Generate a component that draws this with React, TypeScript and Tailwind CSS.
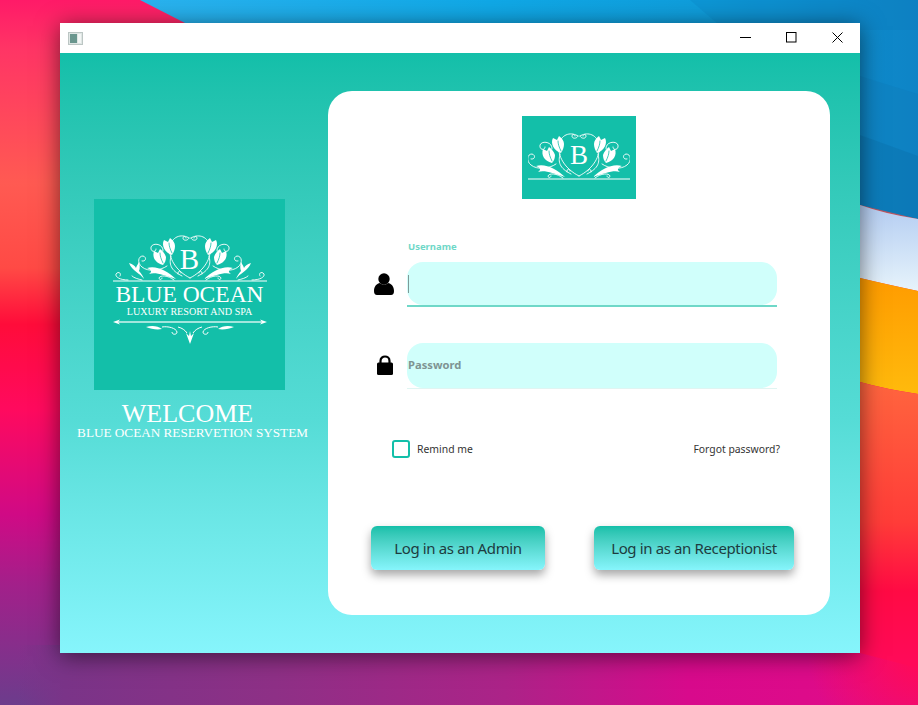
function Wallpaper() {
  return (
    <svg className="absolute inset-0" width="918" height="705" viewBox="0 0 918 705">
      <defs>
        <linearGradient id="leftSide" x1="0" y1="0" x2="0" y2="705" gradientUnits="userSpaceOnUse">
          <stop offset="0" stopColor="#ff1a68" />
          <stop offset="0.07" stopColor="#ff3565" />
          <stop offset="0.26" stopColor="#ff5a52" />
          <stop offset="0.38" stopColor="#ff4a45" />
          <stop offset="0.46" stopColor="#ff0c3a" />
          <stop offset="0.58" stopColor="#ff0a5e" />
          <stop offset="0.73" stopColor="#d00a85" />
          <stop offset="0.83" stopColor="#a2208a" />
          <stop offset="1" stopColor="#6c3c8c" />
        </linearGradient>
        <linearGradient id="bottomStrip" x1="0" y1="0" x2="918" y2="0" gradientUnits="userSpaceOnUse">
          <stop offset="0.02" stopColor="#7a3488" stopOpacity="0" />
          <stop offset="0.07" stopColor="#7a3488" />
          <stop offset="0.3" stopColor="#8e3086" />
          <stop offset="0.55" stopColor="#ac2388" />
          <stop offset="0.75" stopColor="#d80a8c" />
          <stop offset="1" stopColor="#e20c88" />
        </linearGradient>
        <radialGradient id="pinkCorner" cx="925" cy="640" r="120" gradientUnits="userSpaceOnUse">
          <stop offset="0.2" stopColor="#ff0a58" />
          <stop offset="1" stopColor="#ff0a58" stopOpacity="0" />
        </radialGradient>
        <linearGradient id="topBlue" x1="140" y1="0" x2="918" y2="0" gradientUnits="userSpaceOnUse">
          <stop offset="0" stopColor="#2ab2ee" />
          <stop offset="0.45" stopColor="#10a8e6" />
          <stop offset="0.72" stopColor="#0f9ddb" />
          <stop offset="1" stopColor="#0e84c6" />
        </linearGradient>
        <linearGradient id="whiteBand" x1="0" y1="205" x2="0" y2="290" gradientUnits="userSpaceOnUse">
          <stop offset="0" stopColor="#b4cdf2" />
          <stop offset="1" stopColor="#e6f3fb" />
        </linearGradient>
        <linearGradient id="orangeBand" x1="0" y1="280" x2="0" y2="390" gradientUnits="userSpaceOnUse">
          <stop offset="0" stopColor="#ff9c00" />
          <stop offset="1" stopColor="#ffb90c" />
        </linearGradient>
        <linearGradient id="redBand" x1="0" y1="385" x2="0" y2="660" gradientUnits="userSpaceOnUse">
          <stop offset="0" stopColor="#ff643e" />
          <stop offset="0.5" stopColor="#ff3c38" />
          <stop offset="0.75" stopColor="#ff0a44" />
          <stop offset="1" stopColor="#ff0a58" />
        </linearGradient>
      </defs>
      <rect width="918" height="705" fill="url(#leftSide)" />
      <rect x="0" y="645" width="918" height="60" fill="url(#bottomStrip)" />
      <rect x="780" y="520" width="138" height="185" fill="url(#pinkCorner)" />
      <polygon points="140,0 918,0 918,219 860,205 185,23" fill="url(#topBlue)" />
      <polygon points="690,0 918,0 918,30 725,30" fill="#0a6ba8" opacity="0.14" />
      <path d="M860 76 L918 94 L918 219 Q885 214 860 205 Z" fill="#0d6aa6" opacity="0.14" />
      <path d="M860 135 L918 156 L918 219 Q885 214 860 205 Z" fill="#0b5f98" opacity="0.22" />
      <path d="M860 205 Q885 214 918 219 L918 291 Q885 284 860 278 Z" fill="url(#whiteBand)" />
      <path d="M860 278 Q885 284 918 291 L918 394 Q885 389 860 382 Z" fill="url(#orangeBand)" />
      <path d="M860 382 Q885 389 918 394 L918 668 L860 653 Z" fill="url(#redBand)" />
    </svg>
  );
}

// one half of the crest, drawn on the left and mirrored for the right
function CrestHalf({ wide }: { wide: boolean }) {
  return (
    <g>
      <g fill="none" stroke="#fff" strokeWidth="0.9" strokeLinecap="round">
        <path d="M-1 4 C-7 0 -17 1 -20 12 C-22 24 -14 37 0 44" />
        <path d="M-1 4 C-2 7 -7 7 -7 4 C-7 2 -4 2 -4 4" />
        <path d="M-19 22 C-21 30 -20 36 -8 42" />
        <path d="M-27 17 C-26 10 -37 8 -39 13 C-40 18 -34 19 -34 15" />
        <path d="M-23 32 C-30 37 -42 38 -48 33 C-53 29 -52 22 -47 22 C-43 23 -44 28 -48 27" />
        <path d="M-16 46 C-22 41 -30 41 -31 44 C-31 46 -28 46 -28 44" />
        <path d="M-12 40 C-13 37 -9 36 -9 39" />
        {wide && <path d="M-62 46 C-70 46 -75 43 -74 40 C-72 37 -68 39 -70 42" />}
        {wide && <path d="M-48 46 C-52 45 -56 44 -58 42" />}
      </g>
      <g fill="#fff">
        <path d="M-18 21 C-25 19 -29 11 -26 6 L-22 8 L-20 4 C-17 6 -15 9 -15 12 C-15 15 -16 18 -18 21Z" />
        <path d="M-27 31 C-35 29 -38 23 -36 17 L-32 19 L-30 15 C-27 17 -25 20 -24 23 C-24 26 -25 29 -27 31Z" />
        <path d="M-14 45 C-22 37 -34 31 -43 34 C-38 36 -38 38 -41 40 C-34 38 -27 41 -14 45Z" />
        {wide && (
          <path d="M-46 45 C-50 39 -58 37 -61 29 C-57 30 -55 32 -54 34 C-53 31 -52 30 -51 28 C-50 32 -50 34 -51 37 C-49 39 -47 42 -46 45Z" />
        )}
      </g>
      <g fill="none" stroke="#13bfa9" strokeWidth="0.8" strokeLinecap="round">
        <path d="M-18 19 C-20 15 -21 12 -21 9" />
        <path d="M-27 29 C-29 25 -30 22 -30 19" />
      </g>
    </g>
  );
}

function Crest({ wide }: { wide: boolean }) {
  const half = wide ? 77 : 51;
  return (
    <svg width={half * 2} height="48" viewBox={`${-half} 0 ${half * 2} 48`} className="block">
      <CrestHalf wide={wide} />
      <g transform="scale(-1 1)">
        <CrestHalf wide={wide} />
      </g>
      <line x1={-half} y1="47" x2={half} y2="47" stroke="#fff" strokeWidth="1" />
    </svg>
  );
}

function BigLogo() {
  return (
    <div className="w-[191px] h-[191px] bg-[#13bfa9] flex flex-col items-center pt-[35px] text-white font-['Liberation_Serif',serif]">
      <div className="relative">
        <Crest wide />
        <span className="absolute left-0 right-0 top-[9px] text-center text-[29px] leading-[32px]">B</span>
      </div>
      <div className="text-[23.5px] leading-[22px] mt-[1px] whitespace-nowrap">BLUE OCEAN</div>
      <div className="text-[10.1px] leading-[11px] whitespace-nowrap mt-[1px]">LUXURY RESORT AND SPA</div>
      <svg width="154" height="26" viewBox="-77 0 154 26" className="block mt-[2px]">
        <g fill="#fff">
          <rect x="-72" y="2.4" width="144" height="1.2" />
          <polygon points="-77,3 -70,0.5 -72,3 -70,5.5" />
          <polygon points="77,3 70,0.5 72,3 70,5.5" />
          <polygon points="0,25 -4,14 -1,17 0,12 1,17 4,14" />
          <path d="M-44 8 C-38 6 -32 7 -28 10 C-33 11 -39 10 -44 8Z" />
          <path d="M44 8 C38 6 32 7 28 10 C33 11 39 10 44 8Z" />
        </g>
        <g fill="none" stroke="#fff" strokeWidth="1">
          <path d="M-28 8 C-22 7 -14 9 -13 13 C-13 16 -18 16 -18 13" />
          <path d="M28 8 C22 7 14 9 13 13 C13 16 18 16 18 13" />
          <path d="M-12 8 C-8 9 -5 11 -3 14" />
          <path d="M12 8 C8 9 5 11 3 14" />
        </g>
      </svg>
    </div>
  );
}

function SmallLogo() {
  return (
    <div className="w-[114px] h-[83px] bg-[#13bfa9] flex justify-center pt-[16px] text-white font-['Liberation_Serif',serif]">
      <div className="relative">
        <Crest wide={false} />
        <span className="absolute left-0 right-0 top-[8px] text-center text-[27px] leading-[30px]">B</span>
      </div>
    </div>
  );
}

function Caption() {
  return (
    <div className="flex items-center pb-[2px]">
      <button className="w-[46px] h-[28px] flex items-center justify-center">
        <svg width="11" height="11" viewBox="0 0 11 11">
          <line x1="0" y1="5.5" x2="11" y2="5.5" stroke="#000" />
        </svg>
      </button>
      <button className="w-[46px] h-[28px] flex items-center justify-center">
        <svg width="11" height="11" viewBox="0 0 11 11">
          <rect x="0.5" y="0.5" width="9.5" height="9.5" fill="none" stroke="#000" />
        </svg>
      </button>
      <button className="w-[46px] h-[28px] flex items-center justify-center">
        <svg width="11" height="11" viewBox="0 0 11 11">
          <path d="M0.5 0.5 L10.5 10.5 M10.5 0.5 L0.5 10.5" stroke="#000" fill="none" />
        </svg>
      </button>
    </div>
  );
}

function UserIcon() {
  return (
    <svg width="20" height="22" viewBox="0 0 20 22" className="block">
      <circle cx="10" cy="6" r="5.7" fill="#000" />
      <path d="M0 18 C0 13 3 10.5 6 10 C8 12 12 12 14 10 C17 10.5 20 13 20 18 C20 20.5 19 22 17 22 L3 22 C1 22 0 20.5 0 18Z" fill="#000" />
    </svg>
  );
}

function LockIcon() {
  return (
    <svg width="16" height="20" viewBox="0 0 16 20" className="block">
      <path d="M3.5 9 L3.5 6 C3.5 0 12.5 0 12.5 6 L12.5 9" fill="none" stroke="#000" strokeWidth="2.2" />
      <rect x="0" y="7.5" width="16" height="12.5" rx="1.5" fill="#000" />
    </svg>
  );
}

const buttonClass =
  "h-[44px] rounded-[6px] bg-linear-to-b from-[#13bfa9] to-[#86f5fc] text-[15px] tracking-[-0.37px] text-[#1d3c40] shadow-[0_5px_10px_rgba(0,0,0,0.35)]";

export default function App() {
  return (
    <div className="relative w-[918px] h-[705px] overflow-hidden font-['Noto_Sans',sans-serif]">
      <Wallpaper />
      <div className="absolute left-[60px] top-[23px] w-[800px] h-[630px] flex flex-col shadow-[0_3px_22px_rgba(0,0,0,0.55)]">
        <div className="h-[30px] bg-white flex items-center justify-between pl-[8px]">
          <div className="w-[15px] h-[13px] bg-[#dfe6e4] border border-[#bcc6c4] flex gap-[1px] p-[1px]">
            <div className="w-[7px] bg-[#6a968e]" />
            <div className="w-[3px] bg-[#f2f6f5]" />
          </div>
          <Caption />
        </div>

        <div className="flex-1 flex bg-linear-to-b from-[#13bfa9] via-[#55dcd6] via-61% to-[#86f5fc] pl-[34px] pr-[30px] pt-[38px]">
          <div className="w-[234px] flex flex-col items-start pt-[108px]">
            <BigLogo />
            <div className="w-[191px] flex flex-col items-center text-white font-['Liberation_Serif',serif] mt-[13px] whitespace-nowrap">
              <div className="text-[26px] leading-[22px] ml-[-4px]">WELCOME</div>
              <div className="text-[13.2px] leading-[12px] mt-[2px] ml-[6px]">BLUE OCEAN RESERVETION SYSTEM</div>
            </div>
          </div>

          <div className="w-[502px] h-[524px] bg-white rounded-[24px] flex flex-col pt-[25px]">
            <div className="flex justify-center">
              <SmallLogo />
            </div>

            <div className="ml-[80px] mt-[41px] text-[9.5px] leading-[13px] font-bold text-[#6fd8c8]">Username</div>
            <div className="flex items-center mt-[9px]">
              <div className="w-[79px] flex justify-end pr-[13px] mt-[-1px]">
                <UserIcon />
              </div>
              <div className="w-[370px] h-[45px] flex flex-col">
                <div className="h-[43px] bg-[#d0fffb] rounded-[16px] flex items-center pl-[1px]">
                  <div className="w-[1px] h-[18px] bg-[#7f9a98]" />
                </div>
                <div className="h-[2px] bg-[#6fd8c8]" />
              </div>
            </div>

            <div className="flex items-center mt-[36px]">
              <div className="w-[79px] flex justify-end pr-[14px] mt-[-3px]">
                <LockIcon />
              </div>
              <div className="w-[370px] h-[46px] flex flex-col">
                <div className="h-[45px] bg-[#d0fffb] rounded-[16px] flex items-center pl-[1px] text-[11.2px] font-bold text-[#7e9492]">
                  Password
                </div>
                <div className="h-[1px] bg-[#e0f5f2]" />
              </div>
            </div>

            <div className="flex items-center justify-between ml-[64px] w-[388px] mt-[51px] text-[10.4px] leading-[18px] text-[#333]">
              <div className="flex items-center gap-[7px]">
                <div className="w-[18px] h-[18px] rounded-[3px] border-2 border-[#13bfa9]" />
                <span>Remind me</span>
              </div>
              <span>Forgot password?</span>
            </div>

            <div className="flex ml-[43px] gap-[49px] mt-[68px]">
              <button className={`w-[174px] ${buttonClass}`}>Log in as an Admin</button>
              <button className={`w-[200px] ${buttonClass}`}>Log in as an Receptionist</button>
            </div>
          </div>
        </div>
      </div>
    </div>
  );
}
